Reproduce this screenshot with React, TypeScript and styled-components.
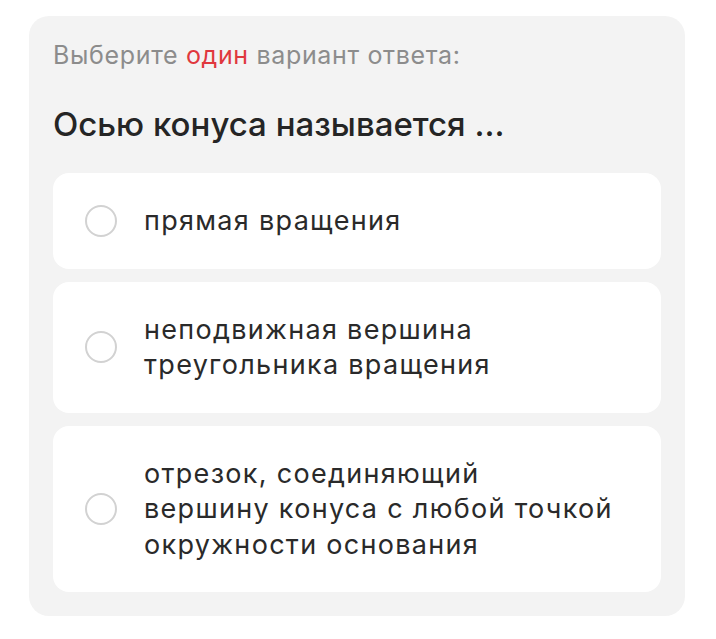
import React from 'react'
import styled, { createGlobalStyle } from 'styled-components'

const GlobalStyle = createGlobalStyle`
  body {
    margin: 0;
    background: #ffffff;
    font-family: Inter, 'Noto Sans', sans-serif;
  }
`

const options = [
  'прямая вращения',
  'неподвижная вершина\nтреугольника вращения',
  'отрезок, соединяющий\nвершину конуса с любой точкой\nокружности основания',
]

const App = () => {
  return (
    <>
      <GlobalStyle />
      <Panel>
        <Hint>
          Выберите <span>один</span> вариант ответа:
        </Hint>
        <Question>Осью конуса называется ...</Question>
        <List>
          {options.map((text) => (
            <Option key={text}>
              <Radio />
              <Label>{text}</Label>
            </Option>
          ))}
        </List>
      </Panel>
    </>
  )
}

const Panel = styled.div`
  margin: 16px 0 0 29px;
  width: 656px;
  box-sizing: border-box;
  padding: 24px;
  background: #f3f3f3;
  border-radius: 20px;
`

const Hint = styled.div`
  font-size: 25px;
  line-height: 30px;
  letter-spacing: 0.65px;
  color: #8c8c8c;
  span {
    color: #e0383e;
  }
`

const Question = styled.div`
  margin: 34px 0 29px 0;
  font-size: 33px;
  line-height: 40px;
  font-weight: 500;
  color: #252525;
`

const List = styled.div`
  display: flex;
  flex-direction: column;
  gap: 13px;
`

const Option = styled.div`
  display: flex;
  align-items: center;
  gap: 27px;
  padding: 30px 32px;
  background: #ffffff;
  border-radius: 16px;
`

const Radio = styled.div`
  flex: none;
  width: 32px;
  height: 32px;
  box-sizing: border-box;
  border: 2px solid #d2d2d2;
  border-radius: 50%;
`

const Label = styled.div`
  white-space: pre-line;
  font-size: 27px;
  line-height: 35.5px;
  letter-spacing: 1.3px;
  color: #2a2a2a;
`

export default App
